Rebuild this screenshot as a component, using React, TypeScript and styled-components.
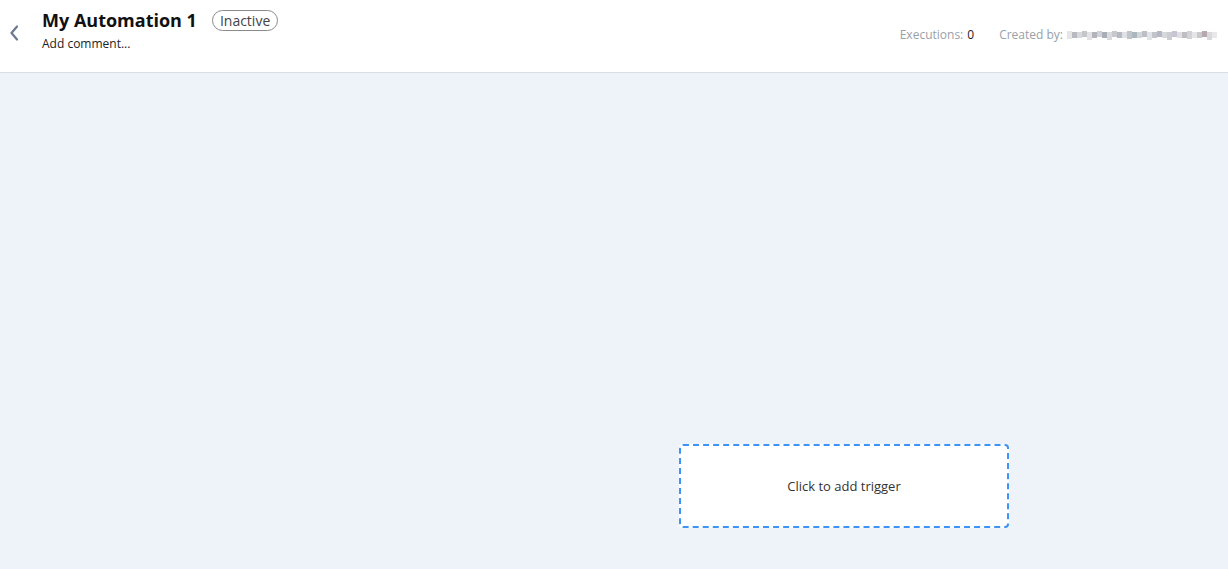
import React from "react";
import styled, { createGlobalStyle } from "styled-components";

const GlobalStyle = createGlobalStyle`
  * { box-sizing: border-box; }
  html, body { margin: 0; padding: 0; height: 100%; }
  body {
    font-family: "Open Sans", "Liberation Sans", sans-serif;
    background: #eef2f9;
    color: #222;
  }
  #root { height: 100%; }
`;

const Page = styled.div`
  display: flex;
  flex-direction: column;
  height: 100vh;
`;

const Header = styled.header`
  height: 73px;
  flex-shrink: 0;
  display: flex;
  align-items: flex-start;
  background: #fff;
  border-bottom: 1px solid #d9dde4;
  padding: 0 11px 0 6px;
`;

const BackBtn = styled.button`
  border: none;
  background: transparent;
  padding: 0;
  margin-top: 24px;
  width: 16px;
  height: 18px;
  display: flex;
  align-items: center;
  justify-content: center;
  color: #6d7890;
  cursor: pointer;
`;

const TitleBlock = styled.div`
  margin-left: 20px;
  padding-top: 8px;
  display: flex;
  flex-direction: column;
`;

const TitleRow = styled.div`
  display: flex;
  align-items: center;
  gap: 15px;
`;

const Title = styled.h1`
  margin: 0;
  font-size: 18px;
  font-weight: 700;
  line-height: 24px;
  color: #111;
`;

const Badge = styled.span`
  display: inline-flex;
  align-items: center;
  height: 21px;
  padding: 0 7px;
  border: 1px solid #8a8a8a;
  border-radius: 11px;
  font-size: 14px;
  color: #444;
`;

const Comment = styled.div`
  margin-top: 3px;
  font-size: 12px;
  color: #222;
`;

const Meta = styled.div`
  margin-left: auto;
  padding-top: 26px;
  display: flex;
  align-items: center;
  gap: 25px;
  font-size: 12px;
  color: #9aa0a8;
`;

const MetaItem = styled.span`
  display: inline-flex;
  align-items: center;
  gap: 4px;
`;

const Value = styled.span`
  color: #222;
`;

const Canvas = styled.main`
  position: relative;
  flex: 1;
  background: #eef2f9;
`;

const TriggerNode = styled.button`
  position: absolute;
  left: 679px;
  top: 371px;
  width: 330px;
  height: 84px;
  background: #fff;
  border: 2px dashed #3d94f6;
  border-radius: 4px;
  font-family: inherit;
  font-size: 13px;
  color: #333;
  cursor: pointer;
  padding: 0;
`;

const blur = [
  "#e6e6e9", "#b9b9c0", "#d8d8dc", "#c4c6ca", "#e2e2e4", "#b2b3bb", "#cfd1d6", "#a9adb5",
  "#d9dadf", "#c8c9cd", "#b7bac3", "#e0e1e5", "#c0c5cc", "#aab7bf", "#d3d5d9", "#bcbfc6",
  "#e2e3e6", "#c2c4cb", "#b4b7c4", "#d7d8dc", "#cbcdd1", "#c7c5d4", "#e0e0e3", "#bdbdc3",
  "#d3d3d7", "#e5e5e7", "#c9c9ce", "#b7a8ad", "#d9d9dd", "#e8e8ea",
];

function Blurred() {
  return (
    <svg width="150" height="10" viewBox="0 0 150 10" aria-hidden>
      {blur.map((c, i) => (
        <rect key={i} x={i * 5} y={i % 3 === 0 ? 1 : 2} width="5" height={i % 4 === 0 ? 8 : 6} fill={c} />
      ))}
    </svg>
  );
}

export default function App() {
  return (
    <>
      <GlobalStyle />
      <Page>
        <Header>
          <BackBtn aria-label="Back">
            <svg width="10" height="16" viewBox="0 0 10 16" fill="none">
              <path d="M8 1.5L2.5 8l5.5 6.5" stroke="currentColor" strokeWidth="2.2" strokeLinecap="round" strokeLinejoin="round" />
            </svg>
          </BackBtn>
          <TitleBlock>
            <TitleRow>
              <Title>My Automation 1</Title>
              <Badge>Inactive</Badge>
            </TitleRow>
            <Comment>Add comment...</Comment>
          </TitleBlock>
          <Meta>
            <MetaItem>
              Executions: <Value>0</Value>
            </MetaItem>
            <MetaItem>
              Created by: <Blurred />
            </MetaItem>
          </Meta>
        </Header>
        <Canvas>
          <TriggerNode>Click to add trigger</TriggerNode>
        </Canvas>
      </Page>
    </>
  );
}
